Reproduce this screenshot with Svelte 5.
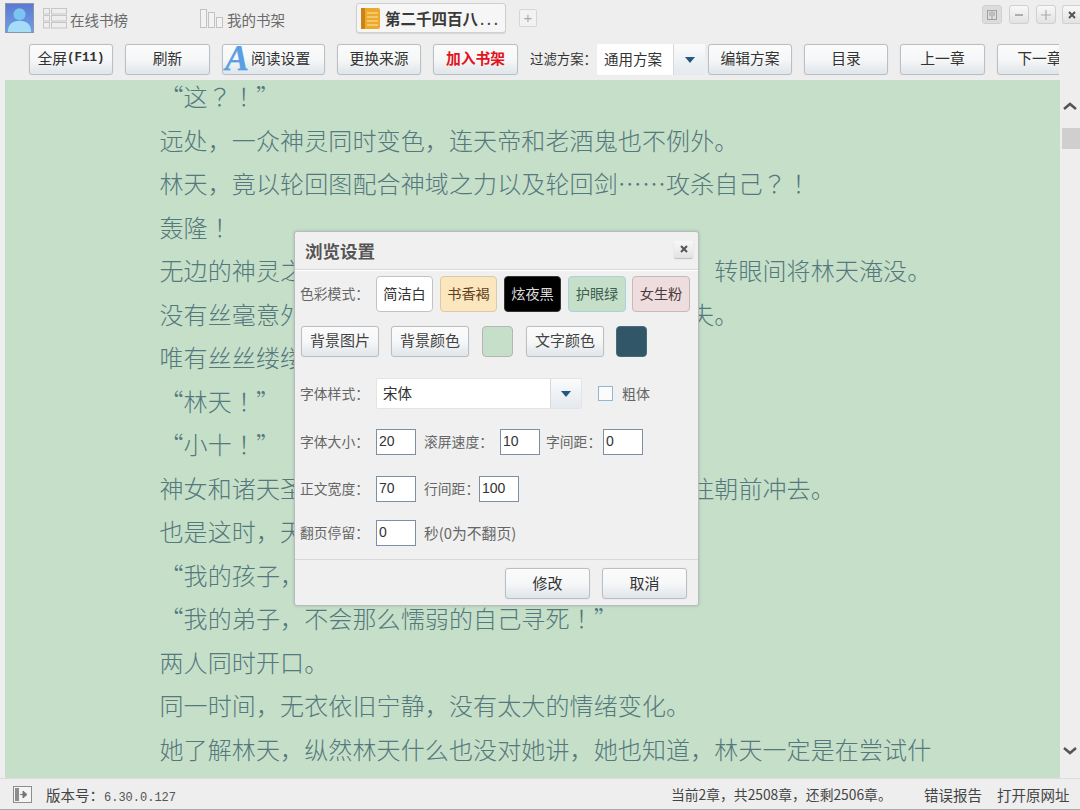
<script>
  const lines = [
    '“这？！”',
    '远处，一众神灵同时变色，连天帝和老酒鬼也不例外。',
    '林天，竟以轮回图配合神域之力以及轮回剑……攻杀自己？！',
    '轰隆！',
    '无边的神灵之力化作滔天洪流席卷而来，恐怖绝伦，转眼间将林天淹没。',
    '没有丝毫意外，那股力量席卷而下，不过眨眼的工夫。',
    '唯有丝丝缕缕的气息残留。',
    '“林天！”',
    '“小十！”',
    '神女和诸天圣地的强者们脸色骤变，纷纷不顾一切往朝前冲去。',
    '也是这时，天帝和老酒鬼却同时出手拦住了众人。',
    '“我的孩子，不会这样死去。”',
    '“我的弟子，不会那么懦弱的自己寻死！”',
    '两人同时开口。',
    '同一时间，无衣依旧宁静，没有太大的情绪变化。',
    '她了解林天，纵然林天什么也没对她讲，她也知道，林天一定是在尝试什'
  ].map((l) => l.split(/([？！]+)/));
  const tools = [
    { t: '全屏', lat: '(F11)', w: 84 },
    { t: '刷新', w: 85 },
    { t: '阅读设置', w: 103, a: true },
    { t: '更换来源', w: 84 },
    { t: '加入书架', w: 85, red: true }
  ];
  const tools2 = [
    { t: '目录', w: 84 },
    { t: '上一章', w: 85 },
    { t: '下一章', w: 85 }
  ];
  const modes = [
    { t: '简洁白', c: 'white' },
    { t: '书香褐', c: 'tan' },
    { t: '炫夜黑', c: 'black' },
    { t: '护眼绿', c: 'green' },
    { t: '女生粉', c: 'pink' }
  ];
</script>

<div class="app">
  <header class="titlebar">
    <div class="avatar">
      <svg viewBox="0 0 29 29" width="27" height="27">
        <circle cx="14.5" cy="10" r="6.5" fill="#7cc4f0" />
        <path d="M2 29c0-8 5-12 12.500-12S27 21 27 29z" fill="#a5dcf7" />
      </svg>
    </div>
    <div class="tab tab1">
      <svg viewBox="0 0 24 21" width="24" height="21" fill="#eeeeee" stroke="#c6c6c6">
        <rect x="0.500" y="0.500" width="6" height="5.500" /><rect x="8.500" y="0.500" width="15" height="5.500" />
        <rect x="0.500" y="7.500" width="6" height="5.500" /><rect x="8.500" y="7.500" width="15" height="5.500" />
        <rect x="0.500" y="14.500" width="6" height="5.500" /><rect x="8.500" y="14.500" width="15" height="5.500" />
      </svg>
      <span>在线书榜</span>
    </div>
    <div class="tab tab2">
      <svg viewBox="0 0 24 21" width="24" height="21" fill="#f2f2f2" stroke="#c2c2c2">
        <rect x="0.500" y="1.500" width="6" height="18" /><rect x="8.500" y="4.500" width="6" height="15" /><rect x="16.500" y="9.500" width="6" height="10" />
      </svg>
      <span>我的书架</span>
    </div>
    <div class="active-tab">
      <svg viewBox="0 0 19 21" width="19" height="21">
        <rect width="19" height="21" rx="2" fill="#eda92b" />
        <rect x="0" y="0" width="4" height="21" fill="#c98415" />
        <path d="M6 5h11M6 9h11M6 13h11M6 17h11" stroke="#fbe6a5" stroke-width="1.200" />
      </svg>
      <span>第二千四百八<span class="dots">...</span></span>
    </div>
    <div class="plus">+</div>
    <div class="winctl">
      <div class="wbtn first"><svg viewBox="0 0 12 12" width="12" height="12" fill="none" stroke="#a0a0a0"><rect x="1.500" y="1.500" width="9" height="9" /><path d="M6 2v8M3 4h2M3 6h2M7 4h2M7 6h2" /></svg></div>
      <div class="wbtn"><svg viewBox="0 0 12 12" width="12" height="12"><path d="M2 6h8" stroke="#999" stroke-width="1.500" /></svg></div>
      <div class="wbtn"><svg viewBox="0 0 12 12" width="12" height="12"><path d="M1 6h10M6 1v10" stroke="#aaa" stroke-width="1.200" /></svg></div>
      <div class="wbtn last"><svg viewBox="0 0 12 12" width="12" height="12"><path d="M3 3l6 6M9 3l-6 6" stroke="#555" stroke-width="2" /></svg></div>
    </div>
  </header>

  <nav class="toolbar">
    {#each tools as b}
      <button class="btn" class:red={b.red} class:with-logo={b.a} style="width:{b.w}px">
        {#if b.a}<span class="logo-a">A</span>{/if}{b.t}{#if b.lat}<span class="lat">{b.lat}</span>{/if}
      </button>
    {/each}
    <span class="filter-label">过滤方案：</span>
    <div class="combo filter-combo">
      <span class="combo-value">通用方案</span>
      <span class="combo-arrow"><i></i></span>
    </div>
    <button class="btn edit">编辑方案</button>
    {#each tools2 as b}
      <button class="btn" style="width:{b.w}px">{b.t}</button>
    {/each}
  </nav>

  <main class="reader">
    <div class="page">
      {#each lines as segs}
        <p>{#each segs as s, i}{#if i % 2}<span class="punct">{s}</span>{:else}{s}{/if}{/each}</p>
      {/each}
    </div>
    <aside class="scrollbar">
      <svg class="chev" viewBox="0 0 16 10" width="16" height="10"><path d="M2 8l6-5 6 5" fill="none" stroke="#555" stroke-width="2.500" /></svg>
      <div class="thumb"></div>
      <svg class="chev bottom" viewBox="0 0 16 10" width="16" height="10"><path d="M2 2l6 5 6-5" fill="none" stroke="#555" stroke-width="2.500" /></svg>
    </aside>
  </main>

  <footer class="status">
    <svg class="status-icon" viewBox="0 0 19 17" width="19" height="17">
      <rect x="0.500" y="0.500" width="18" height="16" fill="#f4f4f4" stroke="#8d8d8d" />
      <rect x="2" y="2" width="4" height="13" fill="#8d8d8d" />
      <path d="M7 8.500h5M10 5l4 3.500-4 3.500z" fill="#777" stroke="#777" />
    </svg>
    <span class="version">版本号：<span class="mono">6.30.0.127</span></span>
    <span class="chapters">当前2章，共2508章，还剩2506章。</span>
    <span class="link first-link">错误报告</span>
    <span class="link">打开原网址</span>
  </footer>

  <section class="dialog">
    <div class="dlg-title">
      <h2>浏览设置</h2>
      <div class="dlg-close"><svg viewBox="0 0 12 12" width="12" height="12"><path d="M3 3l6 6M9 3l-6 6" stroke="#555" stroke-width="2" /></svg></div>
    </div>
    <div class="dlg-body">
      <div class="row modes">
        <label>色彩模式：</label>
        <div class="swatches">
          {#each modes as m}
            <div class="mode {m.c}">{m.t}</div>
          {/each}
        </div>
      </div>
      <div class="row colors">
        <button class="btn c-btn">背景图片</button>
        <button class="btn c-btn">背景颜色</button>
        <div class="chip light"></div>
        <button class="btn c-btn">文字颜色</button>
        <div class="chip dark"></div>
      </div>
      <div class="row fontrow">
        <label>字体样式：</label>
        <div class="combo font-combo">
          <span class="combo-value">宋体</span>
          <span class="combo-arrow"><i></i></span>
        </div>
        <span class="check"></span>
        <span class="muted">粗体</span>
      </div>
      <div class="row size">
        <label>字体大小：</label>
        <div class="field">20</div>
        <span class="sub w76">滚屏速度：</span>
        <div class="field">10</div>
        <span class="sub w57">字间距：</span>
        <div class="field">0</div>
      </div>
      <div class="row width">
        <label>正文宽度：</label>
        <div class="field">70</div>
        <span class="sub w55">行间距：</span>
        <div class="field">100</div>
      </div>
      <div class="row pause">
        <label>翻页停留：</label>
        <div class="field">0</div>
        <span class="sub wide">秒(0为不翻页)</span>
      </div>
    </div>
    <div class="dlg-foot">
      <button class="btn foot">修改</button>
      <button class="btn foot">取消</button>
    </div>
  </section>
</div>

<style>
  :global(body) { margin: 0; background: #eeeeee; }
  .app {
    position: relative;
    width: 1080px;
    height: 810px;
    overflow: hidden;
    display: flex;
    flex-direction: column;
    background: #eeeeee;
    font-family: "Noto Sans CJK SC", "Liberation Sans", sans-serif;
    font-size: 14px;
    color: #333;
  }

  /* title row */
  .titlebar { flex: none; height: 36px; display: flex; align-items: flex-start; box-sizing: border-box; padding-left: 5px; position: relative; }
  .avatar {
    width: 29px; height: 30px; margin-top: 3px; box-sizing: border-box;
    background: linear-gradient(#5d78d2, #6fa0e4);
    border: 1px solid #8a96a8;
    overflow: hidden;
    display: flex; align-items: flex-end; justify-content: center;
  }
  .tab { display: flex; align-items: center; height: 21px; margin-top: 8px; gap: 3px; color: #6b6b6b; font-size: 14.500px; line-height: 21px; }
  .tab span { margin-top: 2px; }
  .tab1 { margin-left: 9px; width: 157px; }
  .tab2 { width: 156px; }
  .active-tab {
    width: 150px; height: 30px; margin-top: 3px; box-sizing: border-box;
    background: #f6f6f6; border: 1px solid #cfcfcf; border-radius: 3px;
    box-shadow: 0 1px 1px #d5d5d5;
    display: flex; align-items: center; padding-left: 4px; gap: 5px;
    font-size: 15.500px; font-weight: 700; color: #3a3a3a; white-space: nowrap;
  }
  .dots { letter-spacing: 2.500px; margin-left: 2px; font-weight: 400; }
  .plus {
    width: 18px; height: 18px; margin: 9px 0 0 13px; box-sizing: border-box;
    border: 1px solid #d6d6d6; border-radius: 2px; background: #f2f2f2;
    color: #aaa; font: 15px/15px "Liberation Sans", sans-serif; text-align: center;
  }
  .winctl { margin-left: auto; display: flex; margin-top: 5px; }
  .wbtn {
    width: 20px; height: 19px; box-sizing: border-box; margin-left: 7px;
    background: linear-gradient(#f8f8f8, #e2e2e2);
    border: 1px solid #d0d0d0; border-radius: 3px;
    display: flex; align-items: center; justify-content: center;
  }
  .wbtn.first { background: #dcdcdc; }
  .wbtn.last { width: 18px; margin-left: 6px; border-right: 0; border-radius: 3px 0 0 3px; }

  /* toolbar */
  .toolbar {
    flex: none; height: 44px; width: 1059px; box-sizing: border-box;
    padding: 8px 0 5px 29px;
    display: flex; align-items: stretch; gap: 12px; overflow: hidden;
  }
  .btn {
    flex: none; box-sizing: border-box; padding: 0 0 3px; margin: 0;
    background: linear-gradient(#fbfbfb 0%, #f6f7f8 50%, #dfe5ea 100%);
    border: 1px solid #b9bfc5; border-radius: 3px;
    box-shadow: 0 0 1px #ccc;
    font: inherit; font-size: 14.800px; color: #333; line-height: 1;
    display: flex; align-items: center; justify-content: center;
    white-space: nowrap;
  }
  .lat { font-family: "Liberation Mono", monospace; font-size: 12.500px; font-weight: 700; }
  .btn.red { color: #e2141d; font-weight: 700; }
  .with-logo { justify-content: flex-start; padding-left: 2px; }
  .logo-a {
    flex: none; width: 26px;
    font: italic 700 36px/29px "Liberation Serif", serif;
    color: #5a9fe2; text-align: left;
    text-shadow: 0 1px 0 #a9d2f4;
  }
  .filter-label { flex: none; width: 67px; margin-right: -12px; line-height: 29px; white-space: nowrap; font-size: 13.400px; }
  .combo { background: #fff; display: flex; align-items: stretch; box-sizing: border-box; border-radius: 2px; }
  .filter-combo { flex: none; width: 108px; margin-right: -9px; }
  .combo-value { flex: 1; padding-left: 7px; line-height: 29px; color: #333; font-size: 14.500px; }
  .combo-arrow {
    flex: none; width: 31px;
    background: linear-gradient(#fafbfc, #e4e9ee);
    border-left: 1px solid #d6dade;
    display: flex; align-items: center; justify-content: center;
  }
  .combo-arrow i { width: 0; height: 0; border: 5.500px solid transparent; border-top: 6px solid #23597f; border-bottom: 0; }
  .edit { width: 84px; }

  /* reading pane */
  .reader { flex: 1; min-height: 0; display: flex; padding-left: 5px; }
  .page {
    flex: 1; min-width: 0; background: #c6dfc9; overflow: hidden;
    padding-left: 155px; box-sizing: border-box;
    color: #54787c;
    font-family: "Noto Sans CJK SC", sans-serif;
    font-weight: 300;
  }
  .page p {
    margin: 0 0 0 -0.500px; font-size: 24px; letter-spacing: 0.120px; line-height: 43.530px; white-space: nowrap; height: 43.530px;
    transform: translateY(-6.500px);
  }
  .punct { font-family: "Noto Sans CJK TC", sans-serif; }
  .scrollbar { flex: none; width: 20px; display: flex; flex-direction: column; align-items: center; position: relative; background: #eeeeee; }
  .chev { margin-top: 21px; }
  .thumb { width: 18px; height: 21px; margin-top: 17px; margin-left: 2px; background: #cfcfcf; }
  .chev.bottom { margin-top: auto; margin-bottom: 22px; }

  /* status bar */
  .status {
    flex: none; height: 32px; box-sizing: border-box; border-bottom: 1px solid #a9a9a9;
    border-top: 1px solid #dcdcdc;
    display: flex; align-items: center; padding-left: 13px; font-size: 14.500px; color: #444;
    white-space: nowrap;
  }
  .status-icon { flex: none; margin-right: 14px; }
  .version { width: 130px; flex: none; }
  .mono { font-family: "Liberation Mono", monospace; font-size: 12px; color: #555; }
  .chapters { margin-left: 495px; width: 253px; flex: none; font-size: 13.800px; }
  .link { font-size: 14.500px; }
  .first-link { width: 73px; flex: none; }

  /* dialog */
  .dialog {
    position: absolute; left: 294px; top: 231px; width: 405px; height: 375px; box-sizing: border-box;
    background: #f0f0f0; border: 1px solid #b6bcbf; border-radius: 3px;
    box-shadow: 0 0 3px rgba(90, 110, 100, .35);
    display: flex; flex-direction: column;
    color: #666;
  }
  .dlg-title {
    flex: none; height: 38px; box-sizing: border-box; border-bottom: 1px solid #d8d8d8;
    display: flex; align-items: center; justify-content: space-between;
    padding: 0 5px 0 10px; box-shadow: 0 1px 0 #fff;
  }
  h2 { margin: 0; font-size: 17.500px; font-weight: 700; color: #555; line-height: 1; }
  .dlg-close {
    width: 19px; height: 17px; margin-top: -3px;
    background: linear-gradient(#f8f8f8, #e2e2e2);
    border: 0; border-radius: 2px; box-shadow: 0 1px 1px #bbb;
    display: flex; align-items: center; justify-content: center;
  }
  .dlg-body { flex: 1; padding: 6px 0 0 5px; display: flex; flex-direction: column; }
  .row { display: flex; align-items: center; }
  label { flex: none; width: 76px; font-size: 13.800px; color: #666; white-space: nowrap; padding-bottom: 2px; }
  .modes { height: 36px; }
  .swatches { display: flex; gap: 7px; }
  .mode {
    width: 57px; height: 36px; box-sizing: border-box; border: 1px solid #c3c3c3; border-radius: 4px;
    padding-bottom: 2px;
    display: flex; align-items: center; justify-content: center; color: #333; font-size: 14.200px;
  }
  .mode.white { background: #fff; }
  .mode.tan { background: #fbe6bd; border-color: #d9cbaa; color: #5f3f20; }
  .mode.black { background: #000; border-color: #333; color: #ddd; }
  .mode.green { width: 58px; background: #c6dfc9; border-color: #a6d3df; color: #3f5f55; }
  .mode.pink { width: 58px; margin-left: -1px; background: #eeddde; border-color: #c8b8b8; color: #4d3a3a; }
  .colors { height: 32px; margin-top: 13px; margin-left: 1px; }
  .c-btn { width: 78px; height: 31px; margin-right: 12px; color: #444; font-size: 15px; }
  .chip { width: 31px; height: 31px; box-sizing: border-box; border-radius: 4px; margin: 0 13px 0 1px; border: 1px solid #b5b5b5; }
  .chip.light { background: #c6dfc9; }
  .chip.dark { background: #315668; border-color: #4a6b7a; margin-left: 0; }
  .fontrow { height: 31px; margin-top: 21px; }
  .font-combo { width: 206px; height: 31px; border: 1px solid #e4e4e4; }
  .font-combo .combo-arrow { width: 30px; }
  .font-combo .combo-value { padding-left: 6px; line-height: 27px; }
  .check { width: 15px; height: 15px; box-sizing: border-box; margin-left: 16px; border: 1px solid #8fb8d6; background: #fbfbfb; }
  .muted { margin-left: 9px; color: #666; padding-bottom: 2px; }
  .size { height: 26px; margin-top: 20px; }
  .width { height: 26px; margin-top: 21px; }
  .pause { height: 26px; margin-top: 18px; }
  .field {
    flex: none; width: 40px; height: 26px; box-sizing: border-box;
    background: #fff; border: 1px solid #7d8fa5; padding-left: 2px;
    color: #333; font: 14px/22px "Liberation Sans", sans-serif;
  }
  .sub { flex: none; margin-left: 8px; font-size: 13.800px; color: #666; white-space: nowrap; padding-bottom: 2px; }
  .w76 { width: 68px; margin-right: 8px; }
  .w57 { width: 51px; margin-left: 6px; margin-right: 6px; }
  .w55 { width: 55px; }
  .wide { font-size: 14.800px; }
  .dlg-foot {
    flex: none; height: 46px; box-sizing: border-box; border-top: 1px solid #d8d8d8;
    display: flex; justify-content: flex-end; gap: 12px;
    padding: 8px 11px 7px 0;
  }
  .foot { width: 85px; height: 31px; font-size: 15px; }
</style>
